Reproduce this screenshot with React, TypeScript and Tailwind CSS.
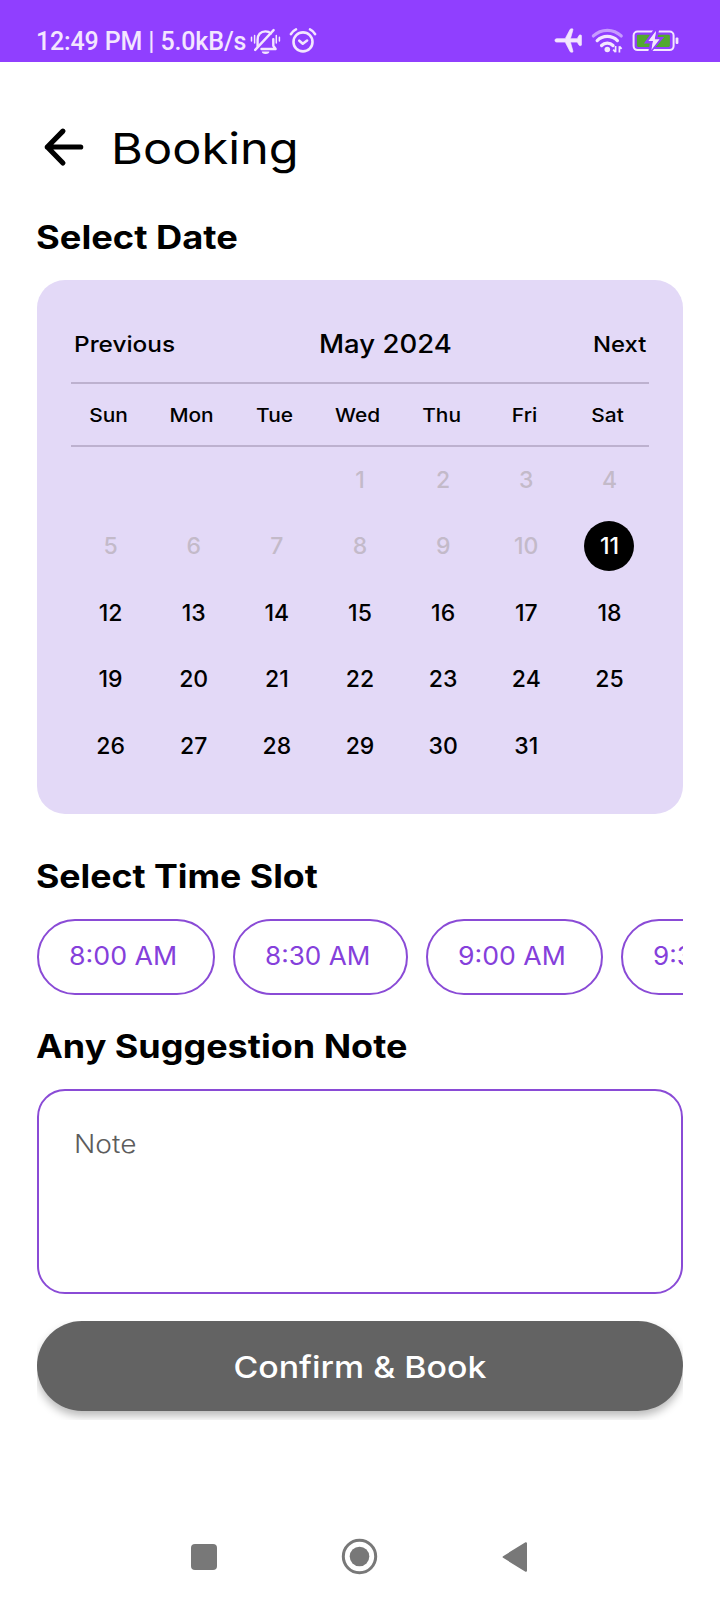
const weekdays = ['Sun', 'Mon', 'Tue', 'Wed', 'Thu', 'Fri', 'Sat'];
const leadingBlanks = 3;
const today = 11;
const days: (number | null)[] = [
  ...Array.from({ length: leadingBlanks }, () => null),
  ...Array.from({ length: 31 }, (_, i) => i + 1),
];

const slots = [
  { label: '8:00 AM', width: 'w-[178px]', stretch: 'scale-x-[1.07]' },
  { label: '8:30 AM', width: 'w-[175px]', stretch: 'scale-x-[1.045]' },
  { label: '9:00 AM', width: 'w-[177px]', stretch: 'scale-x-[1.065]' },
  { label: '9:30 AM', width: 'w-[175px]', stretch: 'scale-x-[1.045]' },
];

function StatusBar() {
  return (
    <header className="flex h-[62px] shrink-0 items-center bg-[#903fff] pt-[21px] text-[#f3e6ff]">
      <span className="ml-9 w-[212px] whitespace-nowrap font-[Roboto] text-[25px] leading-[41px] font-medium tracking-[-0.15px]">
        12:49 PM | 5.0kB/s
      </span>
      <svg className="ml-[2px] h-[30px] w-[68px]" viewBox="250 26.5 68 30" fill="none" stroke="currentColor" strokeLinecap="round">
        <path d="M251.5 36.8v3.6M254.6 35v7.6M276.3 35v7.6M279.4 36.8v3.6" strokeWidth="1.5" />
        <path d="M257.6 45.5v-6.2c0-5.2 3-8.4 7.8-8.4 2.3 0 4.2.8 5.5 2.1M273.3 38.6v6.6l2.3 3.3H261.5" strokeWidth="2.4" strokeLinejoin="round" />
        <path d="M255.2 49.4L273.6 29.6" strokeWidth="2.4" />
        <path d="M261.8 51h7.6a3.8 2.4 0 0 1-7.6 0Z" fill="currentColor" stroke="none" />
        <circle cx="303" cy="41.4" r="9.5" strokeWidth="2.6" />
        <path d="M299.3 40.2l3.5 3 4.3-3.2" strokeWidth="2.6" strokeLinejoin="round" />
        <path d="M290.9 33.7q1.7-3.3 5.1-4.8M315.1 33.7q-1.7-3.3-5.1-4.8" strokeWidth="2.6" />
      </svg>
      <svg className="ml-[236px] h-[30px] w-[126px]" viewBox="554 26.5 126 30" fill="none">
        <path
          d="M556.6 38.2h8.6l5-9.4c.4-.7 3-.7 2.8.2l-2.6 9.2h6.8l2-3.4c.3-.5 2.2-.5 2.2.2v9.6c0 .7-1.9.7-2.2.2l-2-3.2h-6.8l2.6 9.4c.2.9-2.4.9-2.8.2l-5-9.6h-8.6c-2.2 0-2.2-3.4 0-3.4Z"
          fill="currentColor"
          stroke="currentColor"
          strokeWidth="0.7"
        />
        <path d="M593.4 35.4a20 20 0 0 1 27.8 0" stroke="#c79bff" strokeWidth="3.3" strokeLinecap="round" />
        <path d="M597.2 40.1a14.3 14.3 0 0 1 20.2 0M601.6 45a8 8 0 0 1 11.4 0" stroke="currentColor" strokeWidth="3.3" strokeLinecap="round" />
        <circle cx="607.3" cy="49" r="2.8" fill="currentColor" />
        <path d="M615.6 45.5v6.2m0 0l-2.4-2.6M619.4 52v-6.2m0 0l2.2 2.6" stroke="currentColor" strokeWidth="1.7" />
        <rect x="633.6" y="31" width="40" height="18.6" rx="4" stroke="currentColor" strokeWidth="2" />
        <rect x="636.9" y="34.2" width="33" height="12.2" rx="1.4" fill="#52a82f" />
        <rect x="675.6" y="37" width="2.8" height="6.6" rx="1" fill="currentColor" />
        <path
          d="M655.8 28.4L646.6 41.5h5l-2 10.2L661.2 38h-5.2l1.8-9.6Z"
          fill="currentColor"
          stroke="#903fff"
          strokeWidth="2.8"
        />
        <path d="M655.9 30.6L648.4 40.6h4.6l-1.6 8.8L659.6 38.8h-4.8Z" fill="currentColor" />
      </svg>
    </header>
  );
}

function SectionTitle({ text, className }: { text: string; className: string }) {
  return (
    <h2 className="-ml-px h-10 pt-px text-[32px] leading-10 font-bold whitespace-nowrap">
      <span className={`inline-block origin-left ${className}`}>{text}</span>
    </h2>
  );
}

function Calendar() {
  return (
    <section className="mt-[23px] h-[534px] rounded-[28px] bg-[#e3d9f7] px-[34px] pt-[26px]">
      <div className="flex h-[78px] items-center justify-between border-b-2 border-[#bdb1cf] pr-[2px] pl-[3px] font-[450] whitespace-nowrap">
        <button className="w-[100px] text-left text-[22px]">
          <span className="inline-block origin-left scale-x-[1.107]">Previous</span>
        </button>
        <span className="w-[130px] pt-[2px] text-[25px]">
          <span className="inline-block origin-left scale-x-[1.1]">May 2024</span>
        </span>
        <button className="w-[54px] text-left text-[22px]">
          <span className="inline-block origin-left scale-x-[1.085]">Next</span>
        </button>
      </div>
      <div className="h-[63px] border-b-2 border-[#bdb1cf]">
        <div className="-ml-1 grid h-full w-[582px] grid-cols-7 items-center pt-[4px] text-center text-[19px] font-[450]">
          {weekdays.map((name) => (
            <span key={name} className="scale-x-[1.1]">
              {name}
            </span>
          ))}
        </div>
      </div>
      <div className="-ml-[2px] grid w-[582px] auto-rows-[66.4px] grid-cols-7 text-[23px] font-[450]">
        {days.map((day, i) => (
          <div key={i} className="flex items-center justify-center">
            {day !== null && (
              <span
                className={
                  day === today
                    ? 'mb-[2px] flex size-[50px] items-center justify-center rounded-full bg-black pt-[2px] text-white'
                    : day < today
                      ? 'text-[#c3bac9]'
                      : 'text-black'
                }
              >
                {day}
              </span>
            )}
          </div>
        ))}
      </div>
    </section>
  );
}

function NavigationBar() {
  return (
    <nav className="mt-auto flex h-[87px] shrink-0 items-center text-[#787878]">
      <div className="ml-[191px] size-[26px] rounded-[4px] bg-[#787878]" />
      <svg className="ml-[124px] size-[37px]" viewBox="0 0 37 37">
        <circle cx="18.5" cy="18.5" r="16.2" fill="none" stroke="currentColor" strokeWidth="3" />
        <circle cx="18.5" cy="18.5" r="9.8" fill="currentColor" />
      </svg>
      <svg className="ml-[124px] h-[32px] w-[26px]" viewBox="0 0 26 32">
        <path d="M1.6 16L24 2.2v27.6Z" fill="currentColor" stroke="currentColor" strokeWidth="2" strokeLinejoin="round" />
      </svg>
    </nav>
  );
}

export default function App() {
  return (
    <div className="flex h-[1600px] w-[720px] flex-col overflow-hidden bg-white font-['Inter',sans-serif] text-black">
      <StatusBar />
      <main className="px-[37px]">
        <div className="mt-[53px] flex h-[66px] items-center">
          <svg className="ml-[5px] size-[44px]" viewBox="42.5 126 44 44" fill="none" stroke="currentColor" strokeWidth="5.2" strokeLinecap="round" strokeLinejoin="round">
            <path d="M81.2 147H47.8M63.4 131.2L47.8 147l15.6 16" />
          </svg>
          <h1 className="ml-[25px] origin-left scale-x-[1.134] text-[43px] whitespace-nowrap">Booking</h1>
        </div>

        <div className="mt-9">
          <SectionTitle text="Select Date" className="scale-x-[1.134]" />
        </div>
        <Calendar />

        <div className="mt-[42px]">
          <SectionTitle text="Select Time Slot" className="scale-x-[1.115]" />
        </div>
        <div className="mt-[23px] flex gap-[18px] overflow-hidden">
          {slots.map((slot) => (
            <button
              key={slot.label}
              className={`flex h-[76px] shrink-0 items-center rounded-full border-2 border-[#8a4bd6] pb-px pl-[30px] text-[25px] whitespace-nowrap text-[#8540db] ${slot.width}`}
            >
              <span className={`origin-left ${slot.stretch}`}>{slot.label}</span>
            </button>
          ))}
        </div>

        <div className="mt-[31px]">
          <SectionTitle text="Any Suggestion Note" className="scale-x-[1.124]" />
        </div>
        <div className="mt-[23px] h-[205px] rounded-[28px] border-2 border-[#8a4bd6] pt-[33px] pl-[35px] text-[25px] leading-10 font-light text-[#5c5c5c]">
          <span className="inline-block origin-left scale-x-[1.124]">Note</span>
        </div>

        <div className="mt-[27px] h-[99px] overflow-hidden">
          <button className="flex h-[90px] w-full items-center justify-center rounded-full bg-[#636363] pt-px text-[30.5px] font-[450] text-white shadow-[0_5px_9px_rgba(0,0,0,0.27)]">
            <span className="scale-x-[1.11]">Confirm &amp; Book</span>
          </button>
        </div>
      </main>
      <NavigationBar />
    </div>
  );
}
